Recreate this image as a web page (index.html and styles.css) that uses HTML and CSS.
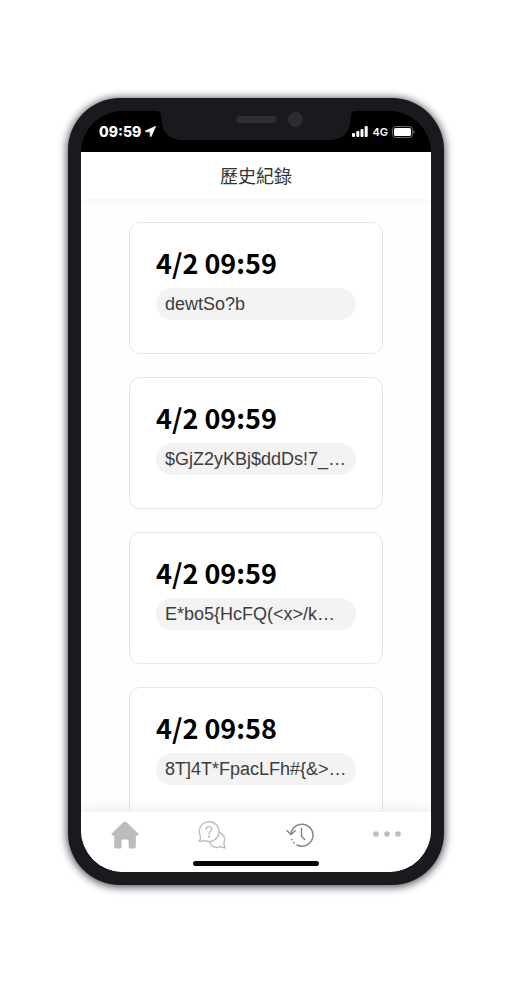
FILE: index.html
```html
<!DOCTYPE html>
<html lang="zh-Hant">
<head>
<meta charset="utf-8">
<meta name="viewport" content="width=device-width, initial-scale=1">
<title>歷史紀錄</title>
<link rel="stylesheet" href="styles.css">
</head>
<body>
<div class="phone">
  <div class="screen">
    <div class="status">
      <div class="status-side">
        <span class="clock">09:59</span>
        <svg width="11" height="11" viewBox="0 0 10 10" aria-hidden="true"><path d="M9.700.3.400 4.400q-.4.600.2.900H4.700V9.400q.3.600.9.200z" fill="#fff" stroke="#fff" stroke-width=".6" stroke-linejoin="round"/></svg>
      </div>
      <svg class="notch" width="200" height="29" viewBox="0 0 200 29" aria-hidden="true">
        <path d="M0 0Q5.500 0 5.500 6C5.500 20 12 29 27 29H173C188 29 194.500 20 194.500 6Q194.500 0 200 0Z" fill="#1a191e"/>
      </svg>
      <div class="earpiece"><span class="speaker"></span><span class="camera"></span></div>
      <div class="status-side">
        <svg width="16" height="11" viewBox="0 0 16 11" fill="#fff" aria-hidden="true"><rect y="7" width="3" height="4" rx="1"/><rect x="4.300" y="5" width="3" height="6" rx="1"/><rect x="8.500" y="3" width="3" height="8" rx="1"/><rect x="12.700" y="0" width="3" height="11" rx="1"/></svg>
        <span class="network">4G</span>
        <svg width="23" height="12" viewBox="0 0 23 12" aria-hidden="true"><rect x=".5" y=".5" width="20" height="11" rx="3" fill="none" stroke="#666"/><rect x="2" y="2" width="17" height="8" rx="1.500" fill="#fff"/><path d="M21.500 4v4q1.300-.6 1.300-2t-1.300-2" fill="#666"/></svg>
      </div>
    </div>
    <header class="header"><h1>歷史紀錄</h1></header>
    <main class="list">
      <article class="card"><h2>4/2 09:59</h2><p>dewtSo?b</p></article>
      <article class="card"><h2>4/2 09:59</h2><p>$GjZ2yKBj$ddDs!7_…</p></article>
      <article class="card"><h2>4/2 09:59</h2><p>E*bo5{HcFQ(&lt;x&gt;/k…</p></article>
      <article class="card"><h2>4/2 09:58</h2><p>8T]4T*FpacLFh#{&amp;&gt;…</p></article>
    </main>
    <nav class="tabs">
      <a href="#home" aria-label="首頁"><svg width="28" height="28" viewBox="0 0 28 28" fill="#bcbcbc"><path d="M12.600 1.100q1.400-1.200 2.800 0L27 12.200q1.300 1.500-.3 2.300H24.800V25.500q0 2-2 2H19q-1.300 0-1.300-1.300V20q0-1.500-1.500-1.500H12q-1.500 0-1.500 1.500v6.200q0 1.300-1.300 1.300H5.200q-2 0-2-2V14.500H1.300q-1.600-.8-.3-2.300z"/></svg></a>
      <a href="#faq" aria-label="問答"><svg width="28" height="28" viewBox="0 0 28 28" fill="none" stroke="#bebebe" stroke-width="1.400" stroke-linecap="round" stroke-linejoin="round"><path d="M2.500 15.400A9.900 9.900 0 1 1 6.600 19.400Q4 20.600 1 20.200 2.800 18.200 2.500 15.400Z"/><path d="M20.900 11A8 8 0 0 1 26 21.500Q25.600 24.500 27.400 26.700 24.800 27 22.300 25.700A8 8 0 0 1 11.300 20.400"/><path d="M8.200 8.300Q8.300 5.600 11 5.600T13.800 8.100C13.800 10.300 11 10.300 11 13"/><circle cx="11" cy="15.600" r=".5" fill="#bebebe"/></svg></a>
      <a href="#history" aria-label="歷史紀錄" aria-current="page"><svg width="28" height="28" viewBox="0 0 28 28" fill="none" stroke="#858585" stroke-width="1.500" stroke-linecap="round" stroke-linejoin="round"><path d="M5 13.500A11 11 0 1 1 11 24"/><path d="M1 9.800 5 13.500 9.300 9.800M15.500 7.200V15.500L18.700 18.500"/><path d="M5.800 18.500h.1M8 21.700h.1" stroke-width="1.700"/></svg></a>
      <a href="#more" aria-label="更多"><svg width="28" height="28" viewBox="0 0 28 28" fill="#bcbcbc"><circle cx="3" cy="13" r="2.800"/><circle cx="14" cy="13" r="2.800"/><circle cx="25" cy="13" r="2.800"/></svg></a>
      <span class="home-bar"></span>
    </nav>
  </div>
</div>
</body>
</html>
```
FILE: styles.css
```css
* { box-sizing: border-box; }

body {
  display: flex;
  height: 100vh;
  margin: 0;
  padding: 98px 68px;
  background: #fff;
  font-family: "Liberation Sans", "Noto Sans CJK TC", sans-serif;
}

.phone {
  display: flex;
  flex: 1;
  min-width: 0;
  padding: 13px;
  border-radius: 52px;
  background: #1a191e;
  box-shadow: 0 1px 9px 1px rgba(20, 15, 25, .75);
}

.screen {
  display: flex;
  flex: 1;
  flex-direction: column;
  min-width: 0;
  overflow: hidden;
  border-radius: 42px;
  background: linear-gradient(#000 50%, #fff 50%);
}

.status {
  position: relative;
  display: flex;
  align-items: center;
  justify-content: space-between;
  height: 41px;
  padding: 0 16px 0 18px;
  background: #000;
  color: #fff;
  font-family: Inter, sans-serif;
}

.status-side {
  display: flex;
  align-items: center;
  gap: 4px;
}

.clock { font-size: 14px; font-weight: 800; }
.network { font-size: 11px; font-weight: 600; }

.notch {
  position: absolute;
  top: 0;
  left: 50%;
  transform: translateX(-50%);
}

.earpiece {
  position: absolute;
  top: 1px;
  left: 50%;
  display: flex;
  align-items: center;
  gap: 11px;
  margin-left: -20px;
}

.speaker {
  width: 41px;
  height: 7px;
  border-radius: 4px;
  background: #2b2d32;
}

.camera {
  width: 15px;
  height: 15px;
  border-radius: 50%;
  background: #2b2d32;
}

.header {
  position: relative;
  height: 47px;
  background: #fff;
  box-shadow: 0 1px 10px rgba(0, 0, 0, .05);
}

.header h1 {
  margin: 0;
  color: #333;
  font: 400 18px/46px "Noto Sans CJK TC", sans-serif;
  text-align: center;
}

.list {
  display: flex;
  flex: 1;
  flex-direction: column;
  gap: 23px;
  min-height: 0;
  padding: 23px 48px 0;
  overflow: hidden;
  background: #fefefe;
}

.card {
  flex: none;
  height: 132px;
  padding: 22px 26px;
  border: 1px solid #e6e6e6;
  border-radius: 11px;
  background: #fff;
}

.card h2 {
  margin: 0;
  color: #000;
  font: 700 27px/36px "Noto Sans CJK TC", sans-serif;
}

.card p {
  margin: 7px 0 0;
  padding: 0 9px;
  overflow: hidden;
  border-radius: 16px;
  background: #f3f3f3;
  color: #3c3c3c;
  font-size: 18px;
  line-height: 32px;
  white-space: nowrap;
}

.tabs {
  position: relative;
  display: grid;
  grid-template-columns: repeat(4, 1fr);
  height: 60px;
  padding-top: 9px;
  background: #fff;
  box-shadow: 0 -1px 14px rgba(0, 0, 0, .09);
}

.tabs a {
  height: 28px;
  text-align: center;
}

.tabs svg { display: block; margin: 0 auto; }

.home-bar {
  position: absolute;
  bottom: 6px;
  left: 50%;
  width: 126px;
  height: 5px;
  border-radius: 3px;
  background: #000;
  transform: translateX(-50%);
}
```
